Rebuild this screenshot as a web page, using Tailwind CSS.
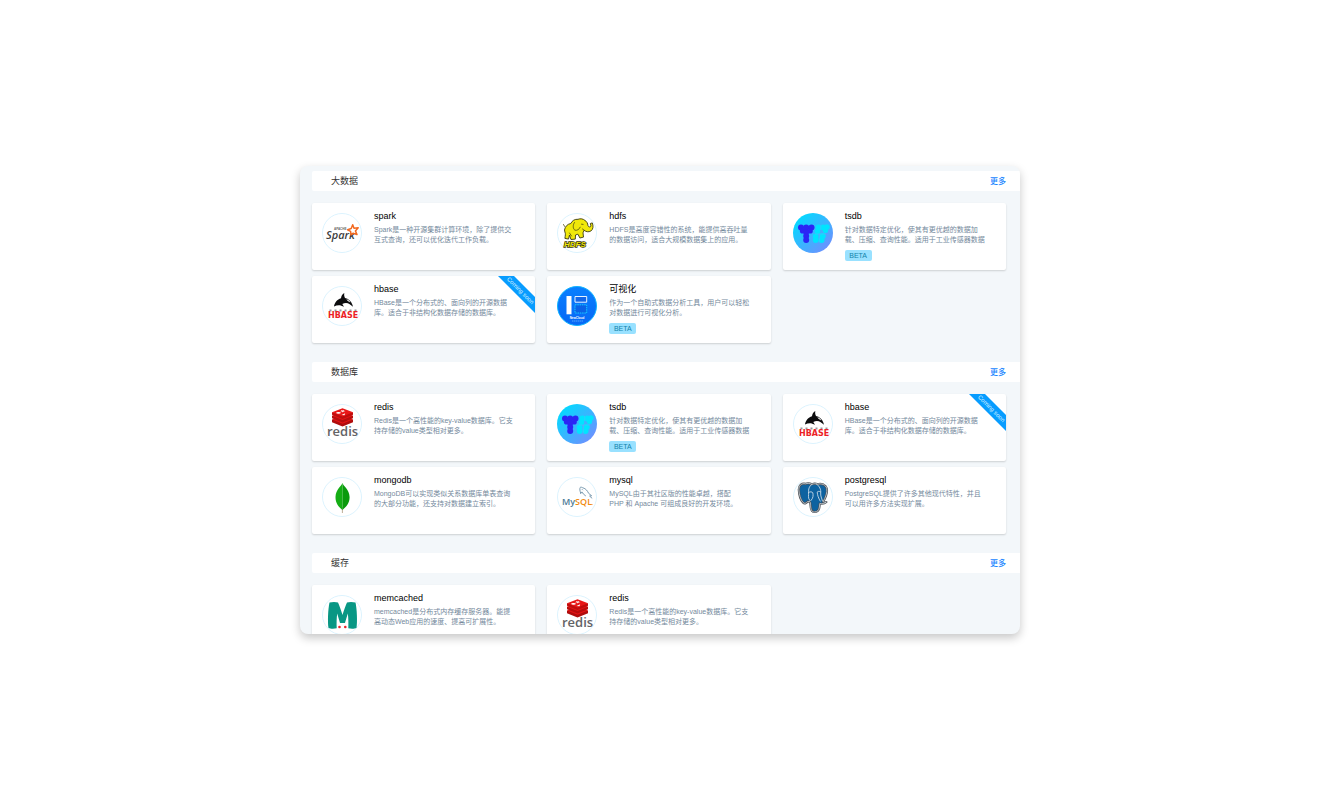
<!DOCTYPE html>
<html lang="zh-CN">
<head>
<meta charset="utf-8">
<meta name="viewport" content="width=device-width, initial-scale=1">
<title>服务目录</title>
<script src="https://cdn.jsdelivr.net/npm/@tailwindcss/browser@4"></script>
</head>
<body class="bg-white font-['Liberation_Sans','Noto_Sans_CJK_SC',sans-serif]">

<!-- Shared logo artwork, each on a 40 x 40 grid -->
<svg class="absolute size-0" aria-hidden="true">
  <defs>
    <linearGradient id="g-tsdb" x1="0" y1="0" x2="1" y2="1"><stop offset=".1" stop-color="#00dcff"/><stop offset=".9" stop-color="#6f8fff"/></linearGradient>
    <linearGradient id="g-vis" x1="0" y1="0" x2="0" y2="1"><stop offset="0" stop-color="#0a80ff"/><stop offset="1" stop-color="#0668f5"/></linearGradient>
    <symbol id="ring" viewBox="0 0 40 40"><circle cx="20" cy="20" r="19.5" fill="#fff" stroke="#dcf3fe"/></symbol>

    <symbol id="spark" viewBox="0 0 40 40">
      <use href="#ring"/>
      <text x="12" y="17" font-family="Liberation Sans" font-size="3" font-weight="700" fill="#666">APACHE</text>
      <text x="4" y="26" font-family="Open Sans" font-size="11" font-style="italic" font-weight="600" fill="#3c3c40">Spark</text>
      <path d="M30.7 11.7 32 15.3l4.2-.5-2.8 3.1 1.6 3.7-3.8-1.4-2.2 1.6-.4-3.4-3-1.6 3.6-1.3z" fill="#fff" stroke="#f26a21" stroke-width="1.5" stroke-linejoin="round"/>
    </symbol>

    <symbol id="hdfs" viewBox="0 0 40 40">
      <use href="#ring"/>
      <path d="M7.5 17c.6-3.500 3-6 6.300-6.500 1.200-2.700 4-4.600 7.200-4.200 2.300-1 5.300-.5 7 1.200 1.800.9 2.700 2.900 3 5.200.5 1.500 2.300 1.600 3 .4l-.7-2.600 2-.6c1.200 3.200 1 6.300-1.400 8.100-2.200 1.400-5.100.8-6.700-.8l-1.200 2.600.5 4.300-3.600.9-2-3.800-2.400.8-.2 4.100-4.300.4-1.500-4.400-1 4-3.600-.7c.3-2.500.9-4.800 0-6.400z" fill="#f0e80a" stroke="#3b3a12" stroke-width=".9" stroke-linejoin="round"/>
      <path d="M17.500 9.500c-1.800 2.300-1.700 6.300.4 7.700 2.200.5 4.300-.7 5.300-3M24.500 11.200l1.600.2M25.500 16l2 1.500M7.700 13.500 6.500 11.500M12.500 20l2 3" fill="none" stroke="#4c4b12" stroke-width=".8" stroke-linecap="round"/>
      <text x="7" y="34" font-family="Liberation Sans" font-size="8" font-style="italic" font-weight="700" fill="#f0e80a" stroke="#33320f" stroke-width="1.400" paint-order="stroke">HDFS</text>
    </symbol>

    <symbol id="tsdb" viewBox="0 0 40 40">
      <circle cx="20" cy="20" r="20" fill="url(#g-tsdb)"/>
      <g fill="#2b25f5"><circle cx="8" cy="14.500" r="3"/><circle cx="13.200" cy="14.500" r="3"/><circle cx="18.500" cy="14.500" r="3"/><circle cx="9.500" cy="18" r="2.600"/><circle cx="17.200" cy="18" r="2.600"/><circle cx="13.200" cy="19" r="3"/><circle cx="13.200" cy="23" r="3"/><circle cx="13.200" cy="27" r="3"/></g>
      <g fill="#00e4ff"><circle cx="25.500" cy="14.500" r="3"/><circle cx="30.200" cy="14.500" r="2.900"/><circle cx="34" cy="14" r="2.700"/><circle cx="24.500" cy="18.500" r="2.700"/><circle cx="32.500" cy="17.500" r="2.600"/><circle cx="22.700" cy="23.500" r="2.900"/><circle cx="29.700" cy="23" r="3"/><circle cx="22.700" cy="27" r="2.900"/><circle cx="28.500" cy="27" r="3"/></g>
      <g fill="none" stroke="#5db4ff" stroke-width=".5"><path d="M22 21h11M26.300 21v8M27.800 12v5"/></g>
    </symbol>

    <symbol id="hbase" viewBox="0 0 40 40">
      <use href="#ring"/>
      <path d="M12 20.500c.5-4 3.300-7.200 7-8.300.2-2 1.200-3.800 3.300-5.200-.3 2-.1 3.600.7 4.900 3.400.8 6 3 7.300 6.500l.7 2.400-3.300-2.500c-2-1.500-5-1.600-7.400-.2l1.700 2.700-4-1.500c-2.200-.2-4.200.2-6 1.200z" fill="#0c0c0e"/>
      <path d="M24.800 13.600c1.500.5 2.600 1.300 3.300 2.300-1.300-.3-2.500-1-3.300-2.300z" fill="#fff" stroke="#fff" stroke-width=".5"/>
      <path d="M7.500 24.500h28" fill="none" stroke="#98989c" stroke-width="1.800" stroke-dasharray="2 3"/>
      <text x="6" y="32" font-family="DejaVu Sans" font-size="8" font-weight="700" fill="#ec1f27">HBASE</text>
    </symbol>

    <symbol id="vis" viewBox="0 0 40 40">
      <circle cx="20" cy="20" r="19.500" fill="url(#g-vis)" stroke="#10b4ff"/>
      <path d="M9.500 10h5v18.300h-5z" fill="#fff"/>
      <path d="M18 10.500h11.700v5.700H18z" fill="#1467e8" stroke="#e8f4ff"/>
      <path d="M18 18.800h11.700v8.200H18z" fill="#0a62e6" stroke="#19c8ff" stroke-dasharray="1.500 .8"/>
      <text x="20" y="33" text-anchor="middle" font-family="Liberation Sans" font-size="3" font-weight="700" fill="#fff">NewCloud</text>
      <path d="M15 35h11" stroke="#6db4ff" stroke-width=".8" stroke-dasharray="1.500 .5"/>
    </symbol>

    <symbol id="redis" viewBox="0 0 40 40">
      <use href="#ring"/>
      <path d="M10 15.500v2.700l10.500 4.200L31 18.200v-2.700z" fill="#b00d0d"/><path d="m10 15.500 10.500-4 10.500 4-10.500 4.200z" fill="#e31414"/>
      <path d="M10 11.800v2.500l10.500 4.200L31 14.300v-2.500z" fill="#b80d0d"/><path d="m10 11.800 10.500-4 10.500 4L20.500 16z" fill="#e31414"/>
      <path d="M10 8.200v2.500l10.500 4.200L31 10.700V8.200z" fill="#c00d0d"/><path d="m10 8.200 10.500-3.900L31 8.200l-10.500 4.200z" fill="#e81616"/>
      <path d="m18.700 5.900 2 .5 1.800-.4-.7.900 1.700.6-2 .1-.7.8-.7-.9-2-.2 1.400-.5z" fill="#fff"/><ellipse cx="16.500" cy="8.800" rx="2.300" ry=".9" fill="#fff"/><path d="m19.500 11 3.700-1.700-.7 2z" fill="#fff"/>
      <text x="5" y="32" font-family="Open Sans" font-size="13" font-weight="600" fill="#636366">redis</text>
    </symbol>

    <symbol id="mongodb" viewBox="0 0 40 40">
      <use href="#ring"/>
      <path d="M20.400 30v6" stroke="#b5a58c" stroke-width=".9"/>
      <path d="M20.400 6c1 3 6.900 6.500 7.200 14 .1 6-3.500 10-7.200 13z" fill="#0a9a0c"/>
      <path d="M20.400 6c-1 3-6.600 6.500-6.900 14-.1 6 3.200 10 6.900 13z" fill="#14ad14"/>
    </symbol>

    <symbol id="mysql" viewBox="0 0 40 40">
      <use href="#ring"/>
      <path d="M23.700 18.300c-.8-2.300-1.200-4.600-.5-5.800.6-.9 2 .1 2.700.3 3 .8 4.700 3.300 5.700 5.500.8 1.200 2.300 1.300 3 2.400l-2 .4 2.300 2M23.700 18.300l1.200-1.400c1 1.800 2.200 3 3.600 3.900M25.200 14.500l.4.400" transform="translate(0 -2)" fill="none" stroke="#6b8ea6" stroke-width=".9" stroke-linecap="round" stroke-linejoin="round"/>
      <text x="5" y="28" font-family="Open Sans" font-size="9" font-weight="600" fill="#4d7b97">My<tspan fill="#f28a10">SQL</tspan></text>
      <circle cx="35" cy="27.500" r=".5" fill="#f28a10"/>
    </symbol>

    <symbol id="postgresql" viewBox="0 0 40 40">
      <use href="#ring"/>
      <path d="M12.500 6.800C8.500 6 5.800 8.500 5.800 12.500c.2 4.500 1.800 10.500 4.200 13 1.500 1.500 3 1 4.500-.8l2.200-.2c.7.800.8 2 .9 4.200.2 3.500.8 6.300 3.800 6.300 3.200 0 4.700-1.800 5-5l.4-3.500c2.500.6 4.900 0 6.500-1.500-1 .2-2.300.2-3.200-.3 2.500-4.200 4.400-9.500 3.700-13.200-1-4-5.300-5.300-9.300-4.300-1.900-.7-3.800-.6-5.500.1-2.200-1-4.500-1.100-6.500-.5z" fill="#0d62a0" stroke="#4a4f55" stroke-width="2.200" stroke-linejoin="round"/>
      <path d="M12.500 6.800C8.500 6 5.800 8.500 5.800 12.500c.2 4.500 1.800 10.500 4.200 13 1.500 1.500 3 1 4.500-.8l2.200-.2c.7.800.8 2 .9 4.200.2 3.500.8 6.300 3.800 6.300 3.200 0 4.700-1.800 5-5l.4-3.500c2.500.6 4.900 0 6.500-1.500-1 .2-2.300.2-3.200-.3 2.500-4.200 4.400-9.500 3.700-13.200-1-4-5.300-5.300-9.300-4.300-1.900-.7-3.800-.6-5.500.1-2.200-1-4.500-1.100-6.500-.5z" fill="none" stroke="#dfe9f0" stroke-width=".7"/>
      <path d="M19 7.300c-3 1.800-3.600 5-3.400 8.200.2 3-1 5.500 1.200 8M23.500 7c3 2.200 4.700 5.500 4.200 9-.3 3 1 5 1.700 7.800M15.500 15.500c1.500-1 3.700-.9 4.300.3.500 2.500.6 5-1.800 7.700M27.500 14.800c-1.300-.8-2.800-.5-3.300.3.200 3 1.300 6 3 9" fill="none" stroke="#dfe9f0" stroke-width=".8" stroke-linecap="round"/>
    </symbol>

    <symbol id="memcached" viewBox="0 0 40 40">
      <use href="#ring"/>
      <path d="M7.500 7.500c3-.8 6.500-.7 8.500 0 1.500 3.500 3.300 8 4.500 12.500C21.700 15.500 23.500 11 25 7.500c2-.7 5.500-.8 8.500 0C35 14 35.500 27 34.500 33c-2 .9-6 .9-8.200.2.200-5 .1-10-.5-14.700-1 3.500-2 6.800-2.800 9.500h-5c-.8-2.700-1.800-6-2.800-9.500-.6 4.700-.7 9.700-.5 14.700-2.200.7-6.200.7-8.200-.2-1-6-.5-19 1-25.500z" fill="#089784"/>
      <circle cx="17.500" cy="32" r="1.300" fill="#e8252b"/><circle cx="23.300" cy="32" r="1.300" fill="#e8252b"/>
    </symbol>

    <symbol id="ribbon" viewBox="0 0 37 37">
      <path d="M0 0h16l21 21v16z" fill="#079cff"/>
      <text transform="translate(21 16) rotate(45)" text-anchor="middle" font-family="Liberation Sans" font-size="6" fill="#d8f1ff">Coming soon</text>
    </symbol>
  </defs>
</svg>

<div class="flex h-screen flex-col items-center px-4 py-[166px]">
<main class="min-h-0 w-full max-w-[720px] flex-1 overflow-hidden rounded-lg bg-[#f3f7fa] pt-[5px] pl-3 shadow-[0_4px_10px_rgba(0,0,0,0.22)]">

  <section class="mb-[19px]">
    <header class="flex h-5 items-center justify-between rounded-l-xs bg-white pr-[14px] pl-[19px]">
      <h2 class="text-[9px] leading-3 text-[#333]">大数据</h2>
      <a href="#" class="pt-px text-[8px] leading-3 font-medium text-[#1785ff]">更多</a>
    </header>
    <div class="mt-3 mr-[14px] grid grid-cols-3 gap-x-3 gap-y-[6px]">
      <article class="flex h-[67px] gap-3 rounded-xs bg-white pt-[7px] pl-[10px] shadow-[0_1px_2px_rgba(0,0,0,0.16)]">
        <svg class="mt-[3px] size-10 shrink-0" role="img" aria-label="Spark"><use href="#spark"/></svg>
        <div><h3 class="text-[9px] leading-3 text-black">spark</h3>
        <p class="mt-[3px] text-[7px] leading-[10px] whitespace-nowrap text-[#74899c]">Spark是一种开源集群计算环境，除了提供交<br>互式查询，还可以优化迭代工作负载。</p></div>
      </article>
      <article class="flex h-[67px] gap-3 rounded-xs bg-white pt-[7px] pl-[10px] shadow-[0_1px_2px_rgba(0,0,0,0.16)]">
        <svg class="mt-[3px] size-10 shrink-0" role="img" aria-label="HDFS"><use href="#hdfs"/></svg>
        <div><h3 class="text-[9px] leading-3 text-black">hdfs</h3>
        <p class="mt-[3px] text-[7px] leading-[10px] whitespace-nowrap text-[#74899c]">HDFS是高度容错性的系统，能提供高吞吐量<br>的数据访问，适合大规模数据集上的应用。</p></div>
      </article>
      <article class="flex h-[67px] gap-3 rounded-xs bg-white pt-[7px] pl-[10px] shadow-[0_1px_2px_rgba(0,0,0,0.16)]">
        <svg class="mt-[3px] size-10 shrink-0" role="img" aria-label="TSDB"><use href="#tsdb"/></svg>
        <div><h3 class="text-[9px] leading-3 text-black">tsdb</h3>
        <p class="mt-[3px] text-[7px] leading-[10px] whitespace-nowrap text-[#74899c]">针对数据特定优化，使其有更优越的数据加<br>载、压缩、查询性能。适用于工业传感器数据</p>
        <span class="mt-[5px] block w-[27px] rounded-xs bg-[#99e1ff] text-center text-[7px] leading-[11px] text-[#1284ac]">BETA</span></div>
      </article>
      <article class="relative flex h-[67px] gap-3 rounded-xs bg-white pt-[7px] pl-[10px] shadow-[0_1px_2px_rgba(0,0,0,0.16)]">
        <svg class="mt-[3px] size-10 shrink-0" role="img" aria-label="HBase"><use href="#hbase"/></svg>
        <div><h3 class="text-[9px] leading-3 text-black">hbase</h3>
        <p class="mt-[3px] text-[7px] leading-[10px] whitespace-nowrap text-[#74899c]">HBase是一个分布式的、面向列的开源数据<br>库。适合于非结构化数据存储的数据库。</p></div>
        <svg class="absolute top-0 right-0 size-[37px]" role="img" aria-label="Coming soon"><use href="#ribbon"/></svg>
      </article>
      <article class="flex h-[67px] gap-3 rounded-xs bg-white pt-[7px] pl-[10px] shadow-[0_1px_2px_rgba(0,0,0,0.16)]">
        <svg class="mt-[3px] size-10 shrink-0" role="img" aria-label="可视化"><use href="#vis"/></svg>
        <div><h3 class="text-[9px] leading-3 text-black">可视化</h3>
        <p class="mt-[3px] text-[7px] leading-[10px] whitespace-nowrap text-[#74899c]">作为一个自助式数据分析工具，用户可以轻松<br>对数据进行可视化分析。</p>
        <span class="mt-[5px] block w-[27px] rounded-xs bg-[#99e1ff] text-center text-[7px] leading-[11px] text-[#1284ac]">BETA</span></div>
      </article>
    </div>
  </section>

  <section class="mb-[19px]">
    <header class="flex h-5 items-center justify-between rounded-l-xs bg-white pr-[14px] pl-[19px]">
      <h2 class="text-[9px] leading-3 text-[#333]">数据库</h2>
      <a href="#" class="pt-px text-[8px] leading-3 font-medium text-[#1785ff]">更多</a>
    </header>
    <div class="mt-3 mr-[14px] grid grid-cols-3 gap-x-3 gap-y-[6px]">
      <article class="flex h-[67px] gap-3 rounded-xs bg-white pt-[7px] pl-[10px] shadow-[0_1px_2px_rgba(0,0,0,0.16)]">
        <svg class="mt-[3px] size-10 shrink-0" role="img" aria-label="Redis"><use href="#redis"/></svg>
        <div><h3 class="text-[9px] leading-3 text-black">redis</h3>
        <p class="mt-[3px] text-[7px] leading-[10px] whitespace-nowrap text-[#74899c]">Redis是一个高性能的key-value数据库。它支<br>持存储的value类型相对更多。</p></div>
      </article>
      <article class="flex h-[67px] gap-3 rounded-xs bg-white pt-[7px] pl-[10px] shadow-[0_1px_2px_rgba(0,0,0,0.16)]">
        <svg class="mt-[3px] size-10 shrink-0" role="img" aria-label="TSDB"><use href="#tsdb"/></svg>
        <div><h3 class="text-[9px] leading-3 text-black">tsdb</h3>
        <p class="mt-[3px] text-[7px] leading-[10px] whitespace-nowrap text-[#74899c]">针对数据特定优化，使其有更优越的数据加<br>载、压缩、查询性能。适用于工业传感器数据</p>
        <span class="mt-[5px] block w-[27px] rounded-xs bg-[#99e1ff] text-center text-[7px] leading-[11px] text-[#1284ac]">BETA</span></div>
      </article>
      <article class="relative flex h-[67px] gap-3 rounded-xs bg-white pt-[7px] pl-[10px] shadow-[0_1px_2px_rgba(0,0,0,0.16)]">
        <svg class="mt-[3px] size-10 shrink-0" role="img" aria-label="HBase"><use href="#hbase"/></svg>
        <div><h3 class="text-[9px] leading-3 text-black">hbase</h3>
        <p class="mt-[3px] text-[7px] leading-[10px] whitespace-nowrap text-[#74899c]">HBase是一个分布式的、面向列的开源数据<br>库。适合于非结构化数据存储的数据库。</p></div>
        <svg class="absolute top-0 right-0 size-[37px]" role="img" aria-label="Coming soon"><use href="#ribbon"/></svg>
      </article>
      <article class="flex h-[67px] gap-3 rounded-xs bg-white pt-[7px] pl-[10px] shadow-[0_1px_2px_rgba(0,0,0,0.16)]">
        <svg class="mt-[3px] size-10 shrink-0" role="img" aria-label="MongoDB"><use href="#mongodb"/></svg>
        <div><h3 class="text-[9px] leading-3 text-black">mongodb</h3>
        <p class="mt-[3px] text-[7px] leading-[10px] whitespace-nowrap text-[#74899c]">MongoDB可以实现类似关系数据库单表查询<br>的大部分功能，还支持对数据建立索引。</p></div>
      </article>
      <article class="flex h-[67px] gap-3 rounded-xs bg-white pt-[7px] pl-[10px] shadow-[0_1px_2px_rgba(0,0,0,0.16)]">
        <svg class="mt-[3px] size-10 shrink-0" role="img" aria-label="MySQL"><use href="#mysql"/></svg>
        <div><h3 class="text-[9px] leading-3 text-black">mysql</h3>
        <p class="mt-[3px] text-[7px] leading-[10px] whitespace-nowrap text-[#74899c]">MySQL由于其社区版的性能卓越，搭配<br>PHP 和 Apache 可组成良好的开发环境。</p></div>
      </article>
      <article class="flex h-[67px] gap-3 rounded-xs bg-white pt-[7px] pl-[10px] shadow-[0_1px_2px_rgba(0,0,0,0.16)]">
        <svg class="mt-[3px] size-10 shrink-0" role="img" aria-label="PostgreSQL"><use href="#postgresql"/></svg>
        <div><h3 class="text-[9px] leading-3 text-black">postgresql</h3>
        <p class="mt-[3px] text-[7px] leading-[10px] whitespace-nowrap text-[#74899c]">PostgreSQL提供了许多其他现代特性，并且<br>可以用许多方法实现扩展。</p></div>
      </article>
    </div>
  </section>

  <section>
    <header class="flex h-5 items-center justify-between rounded-l-xs bg-white pr-[14px] pl-[19px]">
      <h2 class="text-[9px] leading-3 text-[#333]">缓存</h2>
      <a href="#" class="pt-px text-[8px] leading-3 font-medium text-[#1785ff]">更多</a>
    </header>
    <div class="mt-3 mr-[14px] grid grid-cols-3 gap-x-3 gap-y-[6px]">
      <article class="flex h-[67px] gap-3 rounded-xs bg-white pt-[7px] pl-[10px] shadow-[0_1px_2px_rgba(0,0,0,0.16)]">
        <svg class="mt-[3px] size-10 shrink-0" role="img" aria-label="Memcached"><use href="#memcached"/></svg>
        <div><h3 class="text-[9px] leading-3 text-black">memcached</h3>
        <p class="mt-[3px] text-[7px] leading-[10px] whitespace-nowrap text-[#74899c]">memcached是分布式内存缓存服务器。能提<br>高动态Web应用的速度、提高可扩展性。</p></div>
      </article>
      <article class="flex h-[67px] gap-3 rounded-xs bg-white pt-[7px] pl-[10px] shadow-[0_1px_2px_rgba(0,0,0,0.16)]">
        <svg class="mt-[3px] size-10 shrink-0" role="img" aria-label="Redis"><use href="#redis"/></svg>
        <div><h3 class="text-[9px] leading-3 text-black">redis</h3>
        <p class="mt-[3px] text-[7px] leading-[10px] whitespace-nowrap text-[#74899c]">Redis是一个高性能的key-value数据库。它支<br>持存储的value类型相对更多。</p></div>
      </article>
    </div>
  </section>

</main>
</div>
</body>
</html>
